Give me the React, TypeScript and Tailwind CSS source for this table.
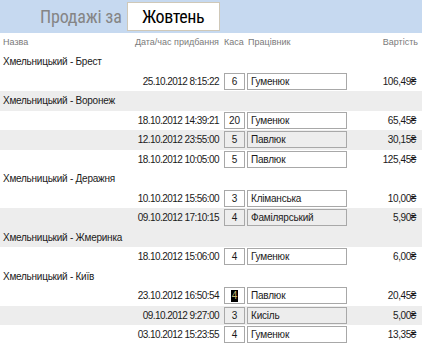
import React from "react";

type Row =
  | { kind: "group"; label: string; shaded?: boolean }
  | {
      kind: "sale";
      date: string;
      till: string;
      clerk: string;
      total: string;
      shaded?: boolean;
      selected?: boolean;
    };

const rows: Row[] = [
  { kind: "group", label: "Хмельницький - Брест" },
  { kind: "sale", date: "25.10.2012 8:15:22", till: "6", clerk: "Гуменюк", total: "106,49₴" },
  { kind: "group", label: "Хмельницький - Воронеж", shaded: true },
  { kind: "sale", date: "18.10.2012 14:39:21", till: "20", clerk: "Гуменюк", total: "65,45₴" },
  { kind: "sale", date: "12.10.2012 23:55:00", till: "5", clerk: "Павлюк", total: "30,15₴", shaded: true },
  { kind: "sale", date: "18.10.2012 10:05:00", till: "5", clerk: "Павлюк", total: "125,45₴" },
  { kind: "group", label: "Хмельницький - Деражня" },
  { kind: "sale", date: "10.10.2012 15:56:00", till: "3", clerk: "Кліманська", total: "10,00₴" },
  { kind: "sale", date: "09.10.2012 17:10:15", till: "4", clerk: "Фамілярський", total: "5,90₴", shaded: true },
  { kind: "group", label: "Хмельницький - Жмеринка", shaded: true },
  { kind: "sale", date: "18.10.2012 15:06:00", till: "4", clerk: "Гуменюк", total: "6,00₴" },
  { kind: "group", label: "Хмельницький - Київ" },
  { kind: "sale", date: "23.10.2012 16:50:54", till: "4", clerk: "Павлюк", total: "20,45₴", selected: true },
  { kind: "sale", date: "09.10.2012 9:27:00", till: "3", clerk: "Кисіль", total: "5,00₴", shaded: true },
  { kind: "sale", date: "03.10.2012 15:23:55", till: "4", clerk: "Гуменюк", total: "13,35₴" },
];

export default function App() {
  return (
    <div className="h-[353px] w-[422px] overflow-hidden bg-white font-['Liberation_Sans',Arial,sans-serif]">
      {/* report title band */}
      <div className="flex h-[33px] items-center bg-[#c6d9f0] pl-[40px] font-['Roboto_Condensed',sans-serif]">
        <span className="whitespace-nowrap text-[18px] leading-none tracking-[-0.2px] text-[#858585]">Продажі за</span>
        <div className="ml-[5px] flex h-[29px] w-[93px] items-center justify-center border border-[#cfc8b8] bg-white text-[18px] leading-none tracking-[-0.4px] text-black">
          Жовтень
        </div>
      </div>

      {/* column captions */}
      <div className="flex h-[19px] items-center whitespace-nowrap text-[9px] text-[#7a7a7a]">
        <span className="w-[130px] pl-[3px]">Назва</span>
        <span className="w-[90px] pr-[1px] text-right">Дата/час придбання</span>
        <span className="ml-[4px] w-[24px]">Каса</span>
        <span className="flex-1">Працівник</span>
        <span className="pr-[4px]">Вартість</span>
      </div>

      {rows.map((r, i) =>
        r.kind === "group" ? (
          <div
            key={i}
            className={`flex h-[19.5px] items-center whitespace-nowrap pl-[3px] text-[10px] tracking-[-0.25px] text-[#1a1a1a] ${
              r.shaded ? "bg-[#ededed]" : ""
            }`}
          >
            {r.label}
          </div>
        ) : (
          <div
            key={i}
            className={`flex h-[19.5px] items-center whitespace-nowrap text-[10px] text-[#1a1a1a] ${
              r.shaded ? "bg-[#ededed]" : ""
            }`}
          >
            <span className="w-[220px] pr-[1px] text-right tracking-[-0.55px]">{r.date}</span>
            <div className="ml-[4px] flex h-[17px] w-[21px] items-center justify-center border border-[#a8a8a8]">
              {r.selected ? (
                <span className="bg-black px-[1px] leading-[12px] text-[#c8b870]">{r.till}</span>
              ) : (
                r.till
              )}
            </div>
            <div className="ml-[2px] flex h-[17px] w-[100px] items-center border border-[#a8a8a8] pl-[3px] tracking-[-0.2px]">
              {r.clerk}
            </div>
            <span className="flex-1 pr-[6px] text-right tracking-[-0.4px]">{r.total}</span>
          </div>
        )
      )}
    </div>
  );
}
